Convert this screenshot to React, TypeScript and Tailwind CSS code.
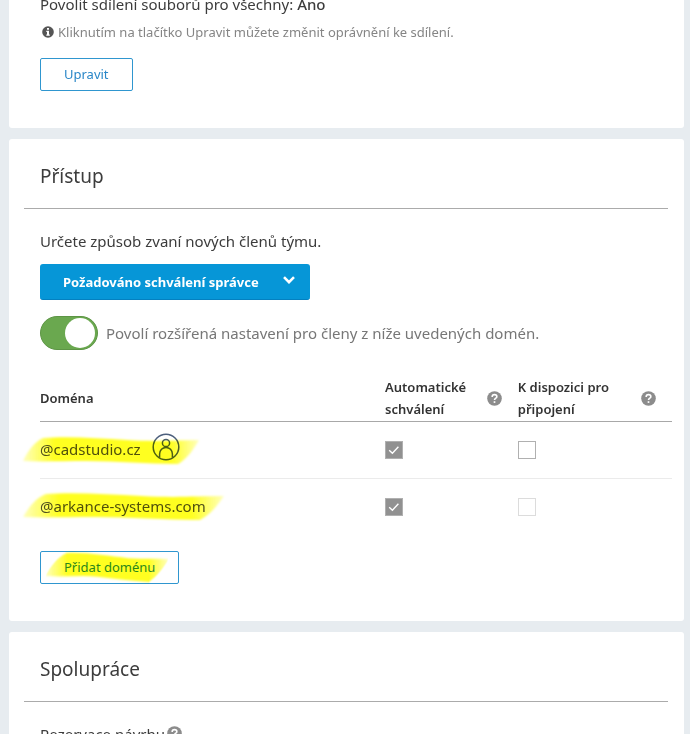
import type { ReactNode } from 'react'

interface DomainRow {
  domain: string
  verified: boolean
  autoApprove: boolean
  joinable: boolean
  joinLocked: boolean
}

const DOMAINS: DomainRow[] = [
  { domain: '@cadstudio.cz', verified: true, autoApprove: true, joinable: false, joinLocked: false },
  { domain: '@arkance-systems.com', verified: false, autoApprove: true, joinable: false, joinLocked: true },
]

const MARKER_FLAT = 'M21 2C45 0 75 2 105 4C135 6 155 4 177 4C171 14 165 23 156 28C125 28 95 25 65 25C40 25 20 26 1 25C6 15 12 6 21 2Z'
const MARKER_TILTED = 'M31 1C60 0 90 4 120 6C145 7 160 6 177 7C171 15 160 24 149 29C125 28 100 26 75 24C50 22 25 25 1 23C8 14 18 5 31 1Z'

export default function App() {
  return (
    <div className="h-screen overflow-hidden bg-[#e7ecf0] pl-[9px] pr-1.5 font-['Noto_Sans',sans-serif] text-[#3c3c3c]">
      <main className="flex flex-col gap-[11px]">
        <section className="-mt-2 rounded-b-[3px] bg-white px-[31px] pb-[37px]">
          <p className="text-[15px] leading-6">
            Povolit sdílení souborů pro všechny: <strong className="font-medium">Ano</strong>
          </p>
          <p className="mt-1 flex items-center gap-1 text-[13px] leading-6 text-[#858585]">
            <InfoIcon />
            Kliknutím na tlačítko Upravit můžete změnit oprávnění ke sdílení.
          </p>
          <OutlineButton className="mt-3.5">Upravit</OutlineButton>
        </section>

        <Card title="Přístup">
          <label htmlFor="invite-mode" className="block text-[15px] leading-6">
            Určete způsob zvaní nových členů týmu.
          </label>
          <div className="relative mt-[11px] w-fit">
            <select
              id="invite-mode"
              className="block h-9 w-[270px] appearance-none rounded-[3px] border-b border-[#0480c0] bg-[#0696d7] pl-[23px] pr-10 pt-0.5 text-[13px] font-bold text-white"
            >
              <option>Požadováno schválení správce</option>
              <option>Kdokoli z týmu</option>
            </select>
            <svg viewBox="0 0 12 8" className="pointer-events-none absolute right-[15px] top-3 h-2 w-3" fill="none" stroke="#fff" strokeWidth="2.6">
              <path d="M1 1.2 6 6.2 11 1.2" />
            </svg>
          </div>
          <label className="mt-4 flex w-fit items-center gap-2 text-[15px] leading-6 text-[#777]">
            <input type="checkbox" role="switch" defaultChecked className="peer sr-only" />
            <span className="flex h-[34px] w-[58px] items-center justify-end rounded-full border border-[#5d9545] bg-[#6aa84f] pr-0.5">
              <span className="size-[30px] rounded-full bg-white" />
            </span>
            Povolí rozšířená nastavení pro členy z níže uvedených domén.
          </label>

          <DomainTable />

          <OutlineButton className="mt-[15px]" highlighted>
            Přidat doménu
          </OutlineButton>
        </Card>

        <Card title="Spolupráce">
          <p className="flex items-center gap-0.5 text-[15px] leading-6">
            Rezervace návrhu <HelpIcon />
          </p>
        </Card>
      </main>
    </div>
  )
}

function Card({ title, children }: { title: string; children: ReactNode }) {
  return (
    <section className="rounded-[3px] bg-white pb-[37px]">
      <h2 className="ml-[15px] mr-4 border-b border-[#ababab] px-4 pb-[17px] pt-[22px] text-[19px] leading-[30px]">
        {title}
      </h2>
      <div className="pl-[31px] pr-3 pt-5">{children}</div>
    </section>
  )
}

function DomainTable() {
  return (
    <table className="mt-[26px] w-full table-fixed border-collapse text-left">
      <thead>
        <tr className="border-b border-[#a8a8a8] text-[13px] leading-[22px] text-[#333]">
          <th className="w-[54.6%] p-0 pb-px font-semibold">Doména</th>
          <th className="w-[21%] p-0 pb-px pr-4 font-semibold">
            <span className="flex items-center justify-between">
              <span>
                Automatické
                <br />
                schválení
              </span>
              <HelpIcon />
            </span>
          </th>
          <th className="p-0 pb-px pr-4 font-semibold">
            <span className="flex items-center justify-between">
              <span>
                K dispozici pro
                <br />
                připojení
              </span>
              <HelpIcon />
            </span>
          </th>
        </tr>
      </thead>
      <tbody>
        {DOMAINS.map(row => (
          <tr key={row.domain} className="h-[57px] border-b border-[#ebebeb] last:border-b-0">
            <td className="p-0 pb-0.5 text-[15px] leading-6 text-[#505050]">
              <span className="relative flex w-fit items-center gap-[11px]">
                {row.domain}
                {row.verified ? (
                  <>
                    <MemberIcon />
                    <Marker path={MARKER_FLAT} className="-left-[18px] top-[3px] h-[30px] w-[178px]" />
                  </>
                ) : (
                  <Marker path={MARKER_FLAT} className="-left-[18px] -top-0.5 h-[30px] w-[203px]" />
                )}
              </span>
            </td>
            <td className="p-0">
              <Tick label={`Automatické schválení ${row.domain}`} checked={row.autoApprove} />
            </td>
            <td className="p-0">
              <Tick label={`K dispozici pro připojení ${row.domain}`} checked={row.joinable} locked={row.joinLocked} />
            </td>
          </tr>
        ))}
      </tbody>
    </table>
  )
}

interface TickProps {
  label: string
  checked: boolean
  locked?: boolean
}

function Tick({ label, checked, locked = false }: TickProps) {
  return (
    <span className="relative block size-[18px]">
      <input
        type="checkbox"
        aria-label={label}
        defaultChecked={checked}
        disabled={locked}
        className="peer block size-[18px] appearance-none border border-[#b0b0b0] bg-white checked:bg-[#919191] disabled:border-[#dcdcdc]"
      />
      <svg
        viewBox="0 0 18 18"
        className="pointer-events-none absolute inset-0 hidden size-[18px] peer-checked:block"
        fill="none"
        stroke="#fff"
        strokeWidth="1.4"
      >
        <path d="M4.2 9.2 7.4 12.2 13.4 5.8" />
      </svg>
    </span>
  )
}

interface OutlineButtonProps {
  className: string
  highlighted?: boolean
  children: ReactNode
}

function OutlineButton({ className, highlighted, children }: OutlineButtonProps) {
  return (
    <button
      type="button"
      className={`${className} relative block h-[33px] rounded-[2px] border border-[#2f96cf] bg-white px-[23px] pt-px text-[13px] text-[#2a87c8]`}
    >
      {children}
      {highlighted && <Marker path={MARKER_TILTED} className="left-1 top-0 h-[31px] w-[124px]" />}
    </button>
  )
}

/** Highlighter stroke laid over the text, multiplied so the letters stay dark. */
function Marker({ path, className }: { path: string; className: string }) {
  return (
    <svg
      viewBox="0 0 178 30"
      preserveAspectRatio="none"
      aria-hidden="true"
      className={`${className} pointer-events-none absolute overflow-visible mix-blend-multiply`}
    >
      <defs>
        <linearGradient id="marker-ink">
          <stop offset="0" stopColor="#ffff20" stopOpacity="0.3" />
          <stop offset="0.18" stopColor="#ffff20" />
          <stop offset="0.84" stopColor="#ffff20" />
          <stop offset="1" stopColor="#ffff20" stopOpacity="0.3" />
        </linearGradient>
      </defs>
      <path d={path} fill="url(#marker-ink)" className="blur-[1px]" />
    </svg>
  )
}

function MemberIcon() {
  return (
    <svg viewBox="0 0 28 28" className="mb-1 size-7" fill="none" stroke="#4c5f7c" strokeWidth="1.5">
      <circle cx="14" cy="14" r="12.8" />
      <circle cx="14" cy="10" r="3.6" />
      <path d="M7.6 24.4V21a6.4 6.6 0 0 1 12.8 0v3.4" />
    </svg>
  )
}

function InfoIcon() {
  return (
    <svg viewBox="0 0 12 12" className="ml-0.5 size-3 shrink-0">
      <circle cx="6" cy="6" r="5.8" fill="#555" />
      <path d="M5 2h2v1.7H5zM4.3 4.8H7v3.7h.8v1.2H4.3V8.5H5V6h-.7z" fill="#fff" />
    </svg>
  )
}

function HelpIcon() {
  return (
    <svg viewBox="0 0 16 16" className="size-[15px] shrink-0">
      <circle cx="8" cy="8" r="7.8" fill="#8c8c8c" />
      <path d="M5.5 6.3C5.5 4.6 6.6 3.9 8 3.9s2.5.8 2.5 2.1C10.5 7.7 8 7.7 8 9.7" fill="none" stroke="#fff" strokeWidth="1.7" />
      <path d="M7.1 10.9h1.8v1.8H7.1z" fill="#fff" />
    </svg>
  )
}
